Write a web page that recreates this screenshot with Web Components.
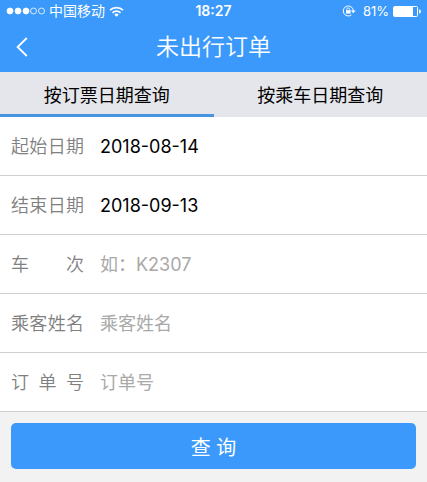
<!DOCTYPE html>
<html lang="zh-CN">
<head>
<meta charset="utf-8">
<meta name="viewport" content="width=device-width, initial-scale=1">
<title>未出行订单</title>
<style>
  html {
    background-color: #f2f2f2;
  }
  body {
    margin: 0;
    font-family: Inter, "Noto Sans CJK SC", sans-serif;
    font-size: 18px;
    --blue: #3b99fc;
  }
</style>
</head>
<body>
<order-page>
  <status-bar slot="top" time="18:27" battery="81">中国移动</status-bar>
  <nav-bar slot="top">未出行订单</nav-bar>
  <tab-bar slot="top">
    <tab-item selected>按订票日期查询</tab-item>
    <tab-item>按乘车日期查询</tab-item>
  </tab-bar>
  <form-field label="起始日期" value="2018-08-14"></form-field>
  <form-field label="结束日期" value="2018-09-13"></form-field>
  <form-field label="车 次" hint="如：K2307"></form-field>
  <form-field label="乘客姓名" hint="乘客姓名"></form-field>
  <form-field label="订 单 号" hint="订单号"></form-field>
  <submit-button slot="bottom">查 询</submit-button>
</order-page>

<script>
'use strict';

function render(host, html) {
  const shadow = host.attachShadow({ mode: 'open' });
  shadow.innerHTML = html;
  return shadow;
}

class OrderPage extends HTMLElement {
  constructor() {
    super();
    render(this, `
      <style>
        :host { display: block; }
        main { background-color: #fff; }
        footer { padding: 11px; }
      </style>
      <header><slot name="top"></slot></header>
      <main><slot></slot></main>
      <footer><slot name="bottom"></slot></footer>
    `);
  }
}

class StatusBar extends HTMLElement {
  constructor() {
    super();
    this._shadow = render(this, `
      <style>
        :host {
          display: grid;
          grid-template-columns: 1fr auto 1fr;
          align-items: center;
          height: 22px;
          padding: 0 6px;
          background-color: var(--blue);
          color: #fff;
          font-size: 14px;
          line-height: 22px;
        }
        div { display: flex; align-items: center; gap: 4px; }
        .right { justify-content: flex-end; }
        time { font-weight: 600; }
        #battery { font-size: 13px; }
        svg { display: block; flex: none; }
      </style>
      <div>
        <svg width="39" height="8" viewBox="0 0 39 8" fill="#fff" stroke="#fff" stroke-width="0.8">
          <circle cx="4" cy="4" r="3"/><circle cx="12" cy="4" r="3"/><circle cx="20" cy="4" r="3"/>
          <g fill="none"><circle cx="27.5" cy="4" r="3"/><circle cx="35.5" cy="4" r="3"/></g>
        </svg>
        <span><slot></slot></span>
        <svg width="15" height="11" viewBox="0 0 15 11" fill="none" stroke="#fff" stroke-width="1.8">
          <path d="M1 4.2a9.3 9.3 0 0 1 13 0"/>
          <path d="M3.5 6.8a5.7 5.7 0 0 1 8 0"/>
          <path d="M7.5 10.8 5.3 8.7a3.1 3.1 0 0 1 4.4 0z" fill="#fff" stroke="none"/>
        </svg>
      </div>
      <time></time>
      <div class="right">
        <svg width="17" height="12" viewBox="0 0 17 12" fill="none" stroke="#fff">
          <path d="M11.3 6A5 5 0 1 0 9.4 9.9"/>
          <path d="M8.9 5.6h4.8l-2.4 2.6z" fill="#fff" stroke="none"/>
          <path d="M4 5.2h4.6v3.4H4z" fill="#fff" stroke="none"/>
          <path d="M4.9 5.4V4.3a1.4 1.4 0 0 1 2.8 0v1.1" stroke-width="0.8"/>
        </svg>
        <span id="battery"></span>
        <svg width="28" height="11" viewBox="0 0 28 11">
          <rect x="0.5" y="0.5" width="24" height="10" rx="1" fill="none" stroke="#fff"/>
          <rect id="level" x="1" y="1" height="9" fill="#fff"/>
          <path d="M26 3.5a2 2 0 0 1 0 4z" fill="#fff"/>
        </svg>
      </div>
    `);
  }
  connectedCallback() {
    const battery = this.getAttribute('battery');
    this._shadow.querySelector('time').textContent = this.getAttribute('time');
    this._shadow.getElementById('battery').textContent = `${battery}%`;
    this._shadow.getElementById('level').setAttribute('width', Math.round(battery * 0.24));
  }
}

class NavBar extends HTMLElement {
  constructor() {
    super();
    render(this, `
      <style>
        :host {
          display: grid;
          grid-template-columns: 44px 1fr 44px;
          align-items: center;
          height: 50px;
          background-color: var(--blue);
          color: #fff;
        }
        button {
          display: grid;
          place-items: center;
          height: 44px;
          padding: 0;
          border: 0;
          background: none;
          color: inherit;
        }
        h1 {
          margin: 0;
          font-size: 23px;
          font-weight: 350;
          line-height: 32px;
          text-align: center;
        }
      </style>
      <button type="button" aria-label="返回">
        <svg width="12" height="20" viewBox="0 0 12 20" fill="none" stroke="currentColor" stroke-width="1.8">
          <path d="M10.8 1 1.6 10l9.2 9"/>
        </svg>
      </button>
      <h1><slot></slot></h1>
    `);
  }
}

class TabBar extends HTMLElement {
  constructor() {
    super();
    render(this, `
      <style>
        :host {
          display: flex;
          height: 45px;
          background-color: #e5e6eb;
        }
        ::slotted(*) { flex: 1; }
      </style>
      <slot></slot>
    `);
    this.addEventListener('click', event => {
      const tab = event.target.closest('tab-item');
      if (!tab) return;
      this.querySelectorAll('tab-item').forEach(item => {
        item.toggleAttribute('selected', item === tab);
      });
    });
  }
}

class TabItem extends HTMLElement {
  constructor() {
    super();
    render(this, `
      <style>
        :host { display: grid; }
        button {
          padding: 2px 0 0;
          border: 0;
          border-bottom: 3px solid transparent;
          background: none;
          color: #000;
          font: inherit;
        }
        :host([selected]) button { border-bottom-color: #4795e0; }
      </style>
      <button type="button"><slot></slot></button>
    `);
  }
}

class FormField extends HTMLElement {
  constructor() {
    super();
    this._shadow = render(this, `
      <style>
        :host {
          display: flex;
          align-items: center;
          gap: 16px;
          box-sizing: border-box;
          height: 59px;
          padding: 2px 11px 0;
          border-bottom: 1px solid #d0d0d0;
          line-height: 28px;
        }
        label {
          flex: none;
          width: 73px;
          color: #808080;
          font-weight: 350;
          text-align-last: justify;
        }
        input {
          flex: 1;
          min-width: 0;
          height: 28px;
          padding: 0;
          border: 0;
          outline: 0;
          background: none;
          color: #000;
          font: inherit;
        }
        input::placeholder { color: #a9a9a9; }
      </style>
      <label for="field"></label>
      <input id="field" type="text">
    `);
  }
  connectedCallback() {
    const input = this._shadow.querySelector('input');
    this._shadow.querySelector('label').textContent = this.getAttribute('label');
    input.value = this.getAttribute('value') || '';
    input.placeholder = this.getAttribute('hint') || '';
  }
}

class SubmitButton extends HTMLElement {
  constructor() {
    super();
    render(this, `
      <style>
        :host { display: block; }
        button {
          display: block;
          width: 100%;
          height: 46px;
          padding: 0;
          border: 0;
          border-radius: 5px;
          background-color: var(--blue);
          color: #fff;
          font: inherit;
          font-size: 20px;
        }
      </style>
      <button type="button"><slot></slot></button>
    `);
  }
}

customElements.define('order-page', OrderPage);
customElements.define('status-bar', StatusBar);
customElements.define('nav-bar', NavBar);
customElements.define('tab-bar', TabBar);
customElements.define('tab-item', TabItem);
customElements.define('form-field', FormField);
customElements.define('submit-button', SubmitButton);
</script>
</body>
</html>
